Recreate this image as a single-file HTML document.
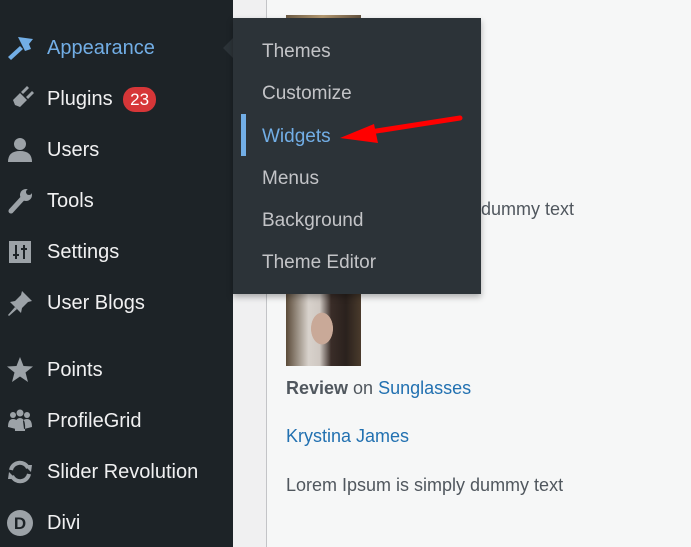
<!DOCTYPE html>
<html><head><meta charset="utf-8"><style>
*{margin:0;padding:0;box-sizing:border-box}
body{width:691px;height:547px;overflow:hidden;position:relative;background:#f0f0f1;font-family:"Liberation Sans",sans-serif}
#side{position:absolute;left:0;top:0;width:233px;height:547px;background:#1d2327}
.it{position:absolute;left:47px;font-size:20px;color:#f0f0f1;line-height:24px;margin-top:1px}
.ic{position:absolute;left:6px;width:28px;height:28px}
#main{position:absolute;left:266px;top:0;right:0;bottom:0;background:#f6f7f7;border-left:1px solid #c3c4c7}
.t{position:absolute;left:286px;font-size:18px;color:#50575e;line-height:22px}
a{color:#2271b1;text-decoration:none}
#fly{position:absolute;left:233px;top:18px;width:248px;height:276px;background:#2c3338;box-shadow:0 3px 6px rgba(0,0,0,.3)}
.f{position:absolute;left:29px;font-size:19px;color:#c3c4c7;line-height:22px;margin-top:2px}
.img{position:absolute;left:286px;width:75px;background:linear-gradient(135deg,#6b5a44,#b59a72 40%,#3a2e25)}
</style></head><body>
<div id="main"></div>
<div class="img" style="top:15px;height:20px"></div>
<div class="img" style="top:294px;height:72px;background:radial-gradient(ellipse 18px 26px at 48% 48%,#c9a998 0 60%,transparent 62%),linear-gradient(90deg,#5a4a38 0%,#d8d2cc 30%,#cfc8c2 45%,#3a2d28 60%,#2a211d 80%,#4a3b2c 100%)"></div>
<div class="t" style="top:198px;left:481px">dummy text</div>
<div class="t" style="top:377px"><b>Review</b> on <a>Sunglasses</a></div>
<div class="t" style="top:425px"><a>Krystina James</a></div>
<div class="t" style="top:474px">Lorem Ipsum is simply dummy text</div>
<div id="side">
<svg class="ic" style="top:33px" viewBox="0 0 28 28"><path d="M12 4 L27 6 L23 11 L25 16 L19 18 Z" fill="#72aee6"/><path d="M14 13 L2 24 L5 27 L17 16Z" fill="#72aee6"/></svg>
<div class="it" style="top:35px;color:#72aee6">Appearance</div>
<svg class="ic" style="top:85px" viewBox="0 0 28 28" fill="#9ca2a7"><path d="M4 26 L9 20 L7 15 L14 8 L21 15 L14 22 L9 20Z"/><path d="M15 7 L21 1 L23 3 L17 9Z M20 12 L26 6 L28 8 L22 14Z"/></svg>
<div class="it" style="top:86px">Plugins <span style="display:inline-block;background:#d63638;color:#fff;border-radius:12px;font-size:17px;padding:0 7px;line-height:25px;margin-left:5px">23</span></div>
<svg class="ic" style="top:136px" viewBox="0 0 28 28" fill="#9ca2a7"><circle cx="14" cy="8" r="6"/><path d="M2 26 Q2 15 14 15 Q26 15 26 26Z"/></svg>
<div class="it" style="top:137px">Users</div>
<svg class="ic" style="top:187px" viewBox="0 0 28 28"><path d="M5 24 L16 12" stroke="#9ca2a7" stroke-width="5" stroke-linecap="round"/><circle cx="20" cy="8" r="6" fill="#9ca2a7"/><circle cx="23" cy="5" r="3" fill="#1d2327"/></svg>
<div class="it" style="top:188px">Tools</div>
<svg class="ic" style="top:238px" viewBox="0 0 28 28"><rect x="3" y="3" width="22" height="22" fill="#9ca2a7"/><path d="M10 7V21M7 17H13M18 21V7M15 11H21" stroke="#1d2327" stroke-width="2"/></svg>
<div class="it" style="top:239px">Settings</div>
<svg class="ic" style="top:289px" viewBox="0 0 28 28" fill="#9ca2a7"><path d="M16 2 L26 12 L22 13 L16 19 L15 24 L4 13 L9 12 L15 6Z"/><path d="M9 18 L2 26 L3 27 L11 20Z"/></svg>
<div class="it" style="top:290px">User Blogs</div>
<svg class="ic" style="top:356px" viewBox="0 0 28 28" fill="#9ca2a7"><path d="M14 1 L17.5 10 L27 10.5 L19.5 16.5 L22 26 L14 20.5 L6 26 L8.5 16.5 L1 10.5 L10.5 10Z"/></svg>
<div class="it" style="top:357px">Points</div>
<svg class="ic" style="top:407px" viewBox="0 0 28 28" fill="#9ca2a7"><circle cx="7" cy="8" r="3"/><circle cx="14" cy="6" r="3.5"/><circle cx="21" cy="8" r="3"/><path d="M2 20 Q2 12 7 12 Q10 12 11 14 L10 22Z M26 20 Q26 12 21 12 Q18 12 17 14 L18 22Z M9 24 Q8 11 14 11 Q20 11 19 24Z"/></svg>
<div class="it" style="top:408px">ProfileGrid</div>
<svg class="ic" style="top:458px" viewBox="0 0 28 28" fill="none" stroke="#9ca2a7" stroke-width="4"><path d="M5 12 A9 9 0 0 1 22 10"/><path d="M23 16 A9 9 0 0 1 6 18"/><path d="M18 7 L26 7 L25 14Z M10 21 L2 21 L3 14Z" fill="#9ca2a7" stroke="none"/></svg>
<div class="it" style="top:459px">Slider Revolution</div>
<svg class="ic" style="top:509px" viewBox="0 0 28 28"><circle cx="14" cy="14" r="13" fill="#9ca2a7"/><text x="14" y="20" font-size="17" font-weight="bold" text-anchor="middle" fill="#1d2327" font-family="Liberation Sans">D</text></svg>
<div class="it" style="top:510px">Divi</div>
</div>
<div style="position:absolute;left:223px;top:38px;width:0;height:0;border:10px solid transparent;border-right-color:#2c3338;border-left:0"></div>
<div id="fly">
<div class="f" style="top:21px">Themes</div>
<div class="f" style="top:63px">Customize</div>
<div style="position:absolute;left:8px;top:96px;width:5px;height:42px;background:#72aee6"></div>
<div class="f" style="top:106px;color:#72aee6">Widgets</div>
<div class="f" style="top:148px">Menus</div>
<div class="f" style="top:190px">Background</div>
<div class="f" style="top:232px">Theme Editor</div>
</div>
<svg style="position:absolute;left:330px;top:110px" width="140" height="40"><path d="M130 8 L40 22" stroke="#f00" stroke-width="5" stroke-linecap="round"/><path d="M10 28 L44 14 L48 33Z" fill="#f00"/></svg>
</body></html>
